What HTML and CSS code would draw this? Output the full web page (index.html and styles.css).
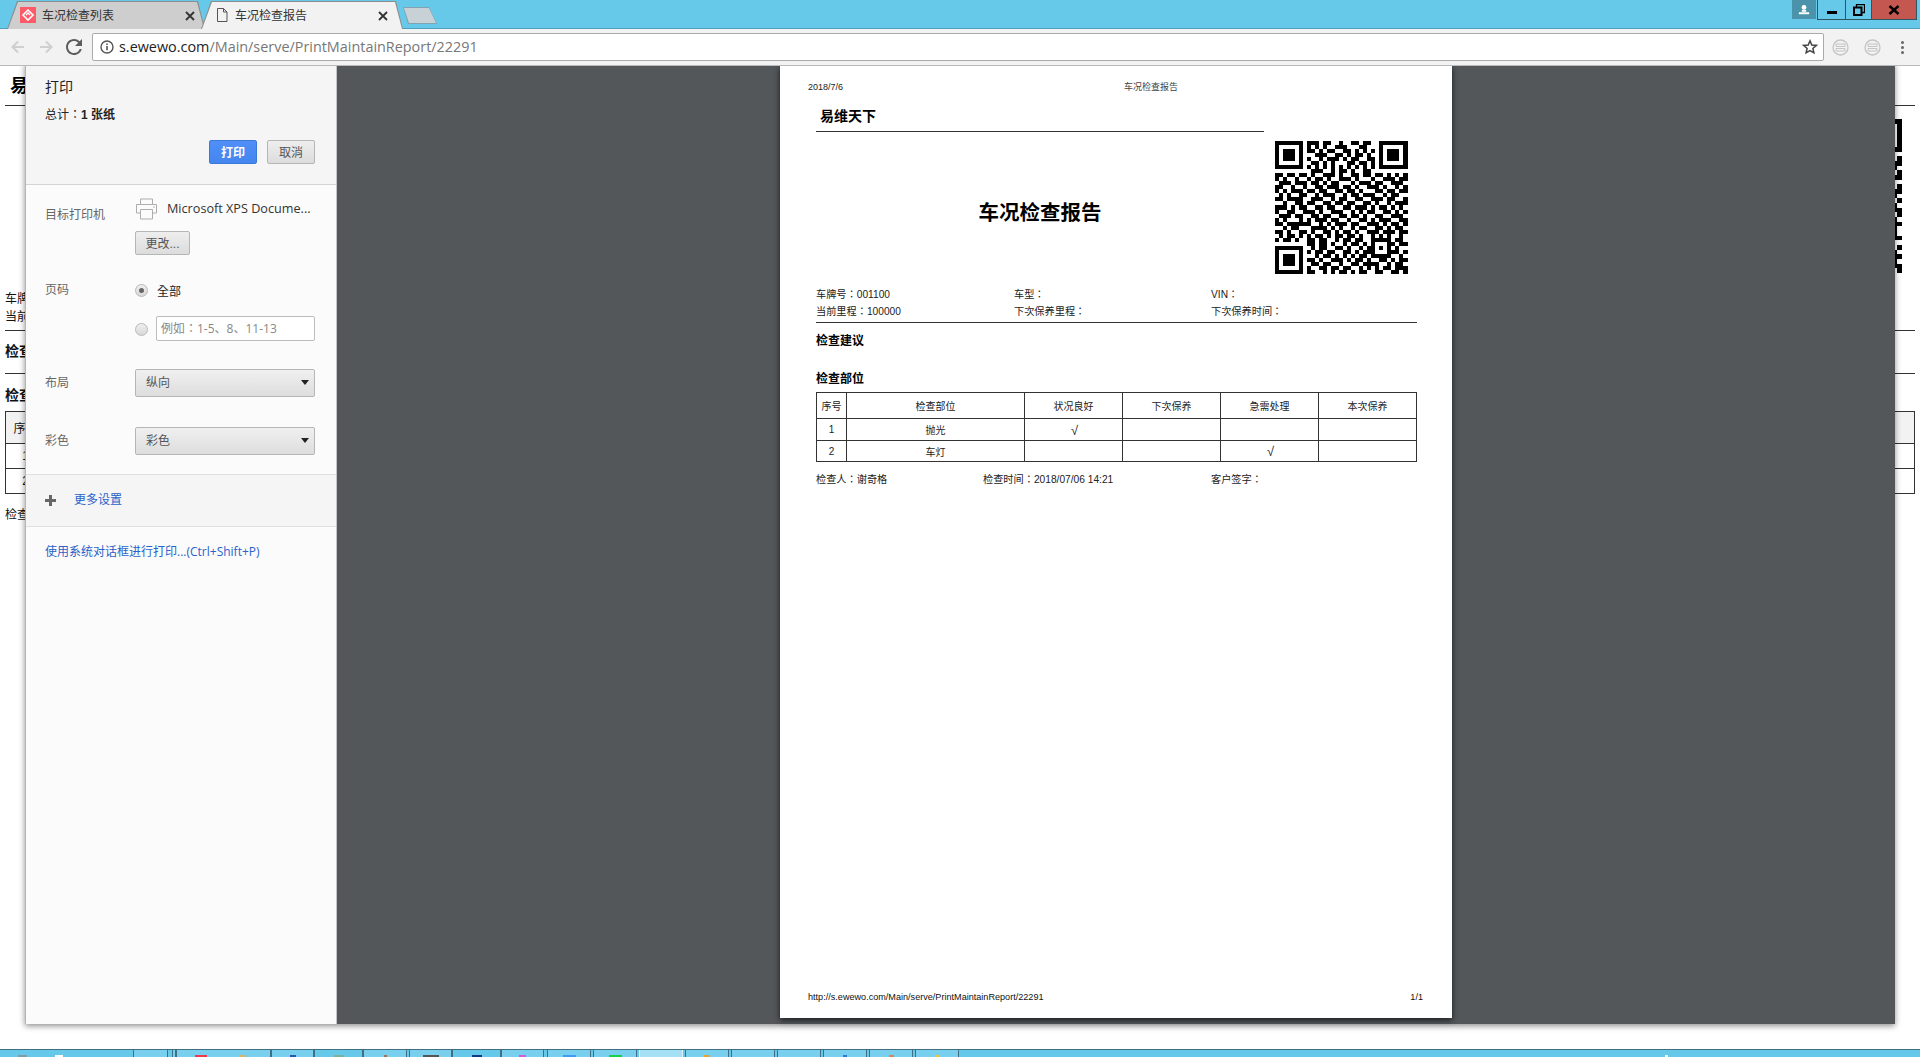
FILE: index.html
```html
<!DOCTYPE html>
<html lang="zh-Hant">
  <head>
    <meta charset="UTF-8" />
    <title>车况检查报告</title>
    <link rel="stylesheet" href="styles.css">
  </head>
  <body>
    <svg class="defs" width="0" height="0">
      <symbol id="qr" viewBox="0 0 33 33"><path id="qrPath" shape-rendering="crispEdges" fill="#000" /></symbol>
    </svg>

    <header class="tabstrip">
      <div class="tab tab-off">
        <svg class="tab-icon" width="16" height="16" viewBox="0 0 16 16"><rect width="16" height="16" fill="#ff5a68" /><path d="M8 3l5 5-5 5-5-5z" fill="none" stroke="#fff" stroke-width="1.6" /><path d="M6 8l2-2 2 2" fill="none" stroke="#fff" stroke-width="1.3" /></svg>
        <span class="tab-title">车况检查列表</span>
        <svg class="tab-close" width="10" height="10" viewBox="0 0 10 10"><path d="M1 1l8 8M9 1l-8 8" stroke="#333" stroke-width="1.8" /></svg>
      </div>
      <div class="tab tab-on">
        <svg class="tab-icon" width="16" height="16" viewBox="0 0 16 16"><path d="M3.5 1.5h6l3.500 3.500v9.500h-9.500z M9.500 1.500v3.500h3.500" fill="none" stroke="#555" stroke-width="1" /></svg>
        <span class="tab-title">车况检查报告</span>
        <svg class="tab-close" width="10" height="10" viewBox="0 0 10 10"><path d="M1 1l8 8M9 1l-8 8" stroke="#333" stroke-width="1.8" /></svg>
      </div>
      <div class="tab-new"></div>
      <div class="win-controls">
        <div class="win-user"><svg width="12" height="12" viewBox="0 0 14 14"><circle cx="7" cy="4" r="2.800" fill="#fff" /><path d="M4.500 7h5v2h-5zM1 9.500h12v2.500h-12z" fill="#fff" /></svg></div>
        <div class="win-btn win-min"><svg width="12" height="12" viewBox="0 0 12 12"><rect x="1" y="7" width="10" height="3" fill="#000" /></svg></div>
        <div class="win-btn win-max"><svg width="12" height="12" viewBox="0 0 12 12"><path d="M3.500 3V.500h8v8H9" fill="none" stroke="#000" stroke-width="1.300" /><rect x="1" y="3.500" width="7.500" height="7.500" fill="none" stroke="#000" stroke-width="2" /></svg></div>
        <div class="win-btn win-close"><svg width="12" height="12" viewBox="0 0 12 12"><path d="M1.500 2l9 8M10.500 2l-9 8" stroke="#000" stroke-width="2.400" /></svg></div>
      </div>
    </header>

    <nav class="toolbar">
      <div class="nav-btn"><svg width="16" height="16" viewBox="0 0 16 16"><path d="M14 8H2.500M8 2.500L2.500 8 8 13.500" fill="none" stroke="#cfcfcf" stroke-width="2" /></svg></div>
      <div class="nav-btn"><svg width="16" height="16" viewBox="0 0 16 16"><path d="M2 8h11.500M8 2.500L13.500 8 8 13.500" fill="none" stroke="#cfcfcf" stroke-width="2" /></svg></div>
      <div class="nav-btn"><svg width="18" height="18" viewBox="3 3 18 18"><path fill="#5c5c5c" d="M17.650 6.350A7.958 7.958 0 0 0 12 4c-4.420 0-7.990 3.580-7.990 8s3.570 8 7.990 8c3.730 0 6.840-2.550 7.730-6h-2.080A5.990 5.990 0 0 1 12 18c-3.310 0-6-2.690-6-6s2.690-6 6-6c1.660 0 3.140.690 4.220 1.780L13 11h7V4l-2.350 2.350z" /></svg></div>
      <div class="omnibox">
        <svg class="omni-info" width="14" height="14" viewBox="0 0 14 14"><circle cx="7" cy="7" r="6" fill="none" stroke="#555" stroke-width="1.400" /><path d="M6.200 6h1.600v4.300H6.200zM6.200 3.500h1.600v1.500H6.200z" fill="#555" /></svg>
        <span class="url"><span class="url-host">s.ewewo.com</span>/Main/serve/PrintMaintainReport/22291</span>
        <svg class="omni-star" width="16" height="16" viewBox="0 0 16 16"><path d="M8 1.800l1.800 4.200 4.500.4-3.400 3 1 4.400L8 11.500l-3.900 2.300 1-4.400-3.400-3 4.500-.4z" fill="none" stroke="#444" stroke-width="1.500" /></svg>
      </div>
      <div class="ext-btn"><svg width="17" height="17" viewBox="0 0 17 17"><circle cx="8.500" cy="8.500" r="7.500" fill="#f2f2f2" stroke="#c4c4c4" stroke-width="1.300" /><path d="M4 5h9v2.500H4zM4 9.500h9V12H4z" fill="none" stroke="#c4c4c4" /></svg></div>
      <div class="ext-btn"><svg width="17" height="17" viewBox="0 0 17 17"><circle cx="8.500" cy="8.500" r="7.500" fill="#f2f2f2" stroke="#c4c4c4" stroke-width="1.300" /><path d="M4 5h9v2.500H4zM4 9.500h9V12H4z" fill="none" stroke="#c4c4c4" /></svg></div>
      <div class="menu-btn"><i></i><i></i><i></i></div>
    </nav>

    <main class="page">
      <div class="bg-page">
        <h1 class="bg-brand">易维天下</h1>
        <div class="bg-top">
          <svg class="bg-qr"><use href="#qr" /></svg>
        </div>
        <p class="bg-line">车牌号：001100</p>
        <p class="bg-line bg-line-last">当前里程：100000</p>
        <h2 class="bg-h2">检查建议</h2>
        <h2 class="bg-h2 bg-h2-second">检查部位</h2>
        <table class="bg-table">
          <tr><th class="bg-no">序号</th><th>检查部位</th><th>状况良好</th><th>下次保养</th><th>急需处理</th><th>本次保养</th></tr>
          <tr><td>1</td><td>抛光</td><td>√</td><td></td><td></td><td></td></tr>
          <tr><td>2</td><td>车灯</td><td></td><td></td><td>√</td><td></td></tr>
        </table>
        <p class="bg-sign">检查人：谢奇格</p>
      </div>

      <div class="print-overlay">
        <aside class="print-side">
          <section class="side-head">
            <div class="side-title">打印</div>
            <div class="side-total">总计：<b>1 张纸</b></div>
            <div class="side-actions">
              <button class="btn btn-primary">打印</button>
              <button class="btn">取消</button>
            </div>
          </section>
          <section class="side-settings">
            <div class="setting setting-dest">
              <label>目标打印机</label>
              <div>
                <div class="dest-row">
                  <svg width="23" height="22" viewBox="0 0 23 22"><path d="M5.500 6V1h12v5M5.500 15H1.500V6.500h20V15h-4M5.500 11.500h12V21h-12z" fill="#fbfbfb" stroke="#adadad" /><circle cx="19" cy="9" r=".8" fill="#adadad" /></svg>
                  <span class="dest-name">Microsoft XPS Docume...</span>
                </div>
                <button class="btn btn-change">更改...</button>
              </div>
            </div>
            <div class="setting setting-pages">
              <label>页码</label>
              <div>
                <div class="radio-row"><span class="radio radio-on"></span><span class="radio-text">全部</span></div>
                <div class="radio-row radio-row-input"><span class="radio"></span><span class="page-input">例如：1-5<span lang="zh-Hans">、</span>8<span lang="zh-Hans">、</span>11-13</span></div>
              </div>
            </div>
            <div class="setting setting-select">
              <label>布局</label>
              <div class="select">纵向</div>
            </div>
            <div class="setting setting-select">
              <label>彩色</label>
              <div class="select">彩色</div>
            </div>
          </section>
          <section class="side-more">
            <svg width="11" height="11" viewBox="0 0 11 11"><path d="M4 0h3v4h4v3H7v4H4V7H0V4h4z" fill="#666" /></svg>
            <a class="side-link">更多设置</a>
          </section>
          <a class="side-link side-system">使用系统对话框进行打印...(Ctrl+Shift+P)</a>
        </aside>

        <div class="preview">
          <article class="paper">
            <div class="print-head"><span>2018/7/6</span><span class="print-head-title">车况检查报告</span></div>
            <div class="report">
              <div class="report-brand">易维天下</div>
              <div class="report-banner">
                <h1 class="report-title">车况检查报告</h1>
                <svg class="report-qr"><use href="#qr" /></svg>
              </div>
              <div class="info-grid">
                <span>车牌号：001100</span><span>车型：</span><span>VIN：</span>
                <span>当前里程：100000</span><span>下次保养里程：</span><span>下次保养时间：</span>
              </div>
              <h2 class="report-h2">检查建议</h2>
              <h2 class="report-h2 report-h2-parts">检查部位</h2>
              <table class="report-table">
                <tr class="row-head"><td class="col-no">序号</td><td class="col-part">检查部位</td><td class="col-s">状况良好</td><td class="col-s">下次保养</td><td class="col-s">急需处理</td><td>本次保养</td></tr>
                <tr class="row-a"><td>1</td><td>抛光</td><td class="check">√</td><td></td><td></td><td></td></tr>
                <tr class="row-b"><td>2</td><td>车灯</td><td></td><td></td><td class="check">√</td><td></td></tr>
              </table>
              <div class="sign-row">
                <span class="sign-a">检查人：谢奇格</span><span class="sign-b">检查时间：2018/07/06 14:21</span><span>客户签字：</span>
              </div>
            </div>
            <div class="print-foot"><span>http://s.ewewo.com/Main/serve/PrintMaintainReport/22291</span><span>1/1</span></div>
          </article>
        </div>
      </div>
    </main>

    <footer class="taskbar">
      <i class="tb-icon tb-lead-a"></i>
      <i class="tb-icon tb-lead-b"></i>
      <div class="tb-btn w35"></div>
      <div class="tb-btn w4"></div>
      <div class="tb-btn w95"><i class="tb-icon ic-red"></i><i class="tb-icon ic-tan"></i></div>
      <div class="tb-btn w43"><i class="tb-icon ic-blue"></i></div>
      <div class="tb-btn w49"><i class="tb-icon ic-sage"></i></div>
      <div class="tb-btn"><i class="tb-icon ic-brown"></i></div>
      <div class="tb-btn w43"><i class="tb-icon ic-grey"></i></div>
      <div class="tb-btn w49"><i class="tb-icon ic-navy"></i></div>
      <div class="tb-btn w43 gap3"><i class="tb-icon ic-pink"></i></div>
      <div class="tb-btn"><i class="tb-icon ic-sky"></i></div>
      <div class="tb-btn"><i class="tb-icon ic-green"></i></div>
      <div class="tb-btn tb-active"></div>
      <div class="tb-btn"><i class="tb-icon ic-orange"></i></div>
      <div class="tb-btn"></div>
      <div class="tb-btn"></div>
      <div class="tb-btn"><i class="tb-icon ic-blue2"></i></div>
      <div class="tb-btn"><i class="tb-icon ic-salmon"></i></div>
      <div class="tb-btn"><i class="tb-icon ic-yellow"></i></div>
      <i class="tb-tray"></i>
    </footer>

    <script src="qr.js"></script>
  </body>
</html>
```

FILE: styles.css
```css
* {
  box-sizing: border-box;
}
html,
body {
  margin: 0;
  height: 100%;
  overflow: hidden;
}
body {
  display: flex;
  flex-direction: column;
  height: 1057px;
  font-family: "Liberation Sans", "Noto Sans CJK TC", sans-serif;
  font-size: 12px;
  color: #111;
  background: #fff;
}
.defs {
  position: absolute;
}
h1,
h2,
p {
  margin: 0;
}

/* tabs */
.tabstrip {
  display: flex;
  flex: none;
  height: 29px;
  padding: 1px 0 0 7px;
  background: #66c9ea;
  border-bottom: 1px solid #4fa0bb;
}
.tab {
  position: relative;
  display: flex;
  align-items: center;
  width: 198px;
  height: 28px;
  background: #8d8d8d;
  clip-path: polygon(0 100%, 10px 0, calc(100% - 7px) 0, 100% 100%);
}
.tab::before {
  content: "";
  position: absolute;
  inset: 1px 1px 0;
  clip-path: polygon(0 100%, 10px 0, calc(100% - 7px) 0, 100% 100%);
}
.tab > * {
  position: relative;
}
.tab-off::before {
  background: #cecece;
}
.tab-on {
  width: 202px;
  margin-left: -4px;
}
.tab-on::before {
  background: #f2f2f2;
}
.tab-icon {
  margin-left: 13px;
}
.tab-title {
  margin: -2px 0 0 6px;
  width: 72px;
  color: #333;
  white-space: nowrap;
}
.tab-close {
  margin-left: 71px;
  margin-top: 1px;
}
.tab-on .tab-title {
  margin-left: 5px;
}
.tab-new {
  position: relative;
  width: 34px;
  height: 17px;
  margin: 6px 0 0 0;
  background: #7fa3b0;
  clip-path: polygon(0 0, 26px 0, 100% 100%, 5px 100%);
}
.tab-new::before {
  content: "";
  position: absolute;
  inset: 1px 1px 1px;
  background: #c8d2d6;
  clip-path: polygon(0 0, 25px 0, 100% 100%, 5px 100%);
}
.win-controls {
  display: flex;
  margin: -1px 3px 0 auto;
  height: 20px;
}
.win-user {
  display: flex;
  align-items: center;
  justify-content: center;
  width: 24px;
  height: 19px;
  margin-right: 1px;
  background: #4a93aa;
}
.win-btn {
  display: flex;
  align-items: center;
  justify-content: center;
  border: 1px solid #2f5563;
  border-top: none;
  border-left: none;
}
.win-min {
  width: 29px;
  border-left: 1px solid #2f5563;
}
.win-max {
  width: 26px;
}
.win-close {
  width: 45px;
  background: #c4574f;
}

/* toolbar */
.toolbar {
  display: flex;
  align-items: center;
  flex: none;
  height: 37px;
  padding: 0 4px;
  background: #f2f2f2;
  border-bottom: 1px solid #b9b9b9;
}
.nav-btn {
  display: flex;
  align-items: center;
  justify-content: center;
  width: 28px;
}
.omnibox {
  display: flex;
  align-items: center;
  flex: 1;
  height: 28px;
  margin-left: 4px;
  margin-top: -1px;
  padding: 0 5px 0 7px;
  background: #fff;
  border: 1px solid #aaa;
  border-radius: 2px;
}
.url {
  flex: 1;
  margin-left: 5px;
  font-family: "Open Sans", "Noto Sans", sans-serif;
  font-size: 14.400px;
  color: #777;
}
.url-host {
  color: #222;
}
.ext-btn {
  display: flex;
  justify-content: center;
  width: 32px;
}
.menu-btn {
  display: flex;
  flex-direction: column;
  align-items: center;
  gap: 2px;
  width: 28px;
}
.menu-btn i {
  width: 3px;
  height: 3px;
  background: #666;
  border-radius: 50%;
}

/* page behind the print dialog */
.page {
  position: relative;
  flex: 1;
  background: #fff;
  overflow: hidden;
}
.bg-page {
  padding: 0 5px;
}
.bg-brand {
  padding: 10px 0 9px 5px;
  font-size: 18px;
  line-height: 20px;
  font-weight: 600;
  color: #000;
  border-bottom: 1px solid #333;
}
.bg-top {
  display: flex;
  justify-content: flex-end;
  height: 184px;
  padding: 13px 13px 0 0;
}
.bg-qr {
  width: 154px;
  height: 154px;
}
.bg-line {
  height: 18px;
  line-height: 19px;
}
.bg-line-last {
  height: 23px;
  border-bottom: 1px solid #333;
}
.bg-h2 {
  height: 43px;
  padding-top: 11px;
  font-size: 14px;
  line-height: 18px;
  border-bottom: 1px solid #333;
}
.bg-h2-second {
  height: 37px;
  padding-top: 12px;
  border-bottom: none;
}
.bg-table {
  width: 100%;
  border-collapse: collapse;
  text-align: center;
}
.bg-table th,
.bg-table td {
  border: 1px solid #333;
  font-weight: normal;
  padding: 0;
  height: 25px;
}
.bg-table th {
  height: 32px;
  background: #f2f2f2;
}
.bg-no {
  width: 40px;
}
.bg-sign {
  margin-top: 12px;
  line-height: 18px;
}

/* print preview */
.print-overlay {
  position: absolute;
  top: -3px;
  left: 25px;
  display: flex;
  width: 1870px;
  height: 961px;
  box-shadow: 0 2px 6px rgba(0, 0, 0, 0.45);
}
.print-side {
  flex: none;
  width: 312px;
  background: #fbfbfb;
  border-left: 1px solid #b5b5b5;
  border-right: 1px solid #c4c4c4;
  border-top: 1px solid #c4c4c4;
}
.side-head {
  height: 121px;
  padding: 13px 21px 0 19px;
  background: #f5f5f5;
  border-bottom: 1px solid #d4d4d4;
}
.side-title {
  font-size: 14px;
  line-height: 20px;
  color: #222;
}
.side-total {
  margin-top: 9px;
  line-height: 18px;
  color: #222;
}
.side-actions {
  display: flex;
  justify-content: flex-end;
  gap: 10px;
  margin-top: 16px;
}
.btn {
  width: 48px;
  height: 24px;
  padding: 0 0 1px;
  font: 12px "Liberation Sans", "Noto Sans CJK TC", sans-serif;
  color: #555;
  background: linear-gradient(#eeeeee, #dcdcdc);
  border: 1px solid #b6b6b6;
  border-radius: 2px;
}
.btn-primary {
  font-weight: bold;
  color: #fff;
  background: linear-gradient(#4f8ff7, #4485ef);
  border-color: #3c78d8;
}
.btn-change {
  display: block;
  width: 55px;
  margin-top: 11px;
  padding-bottom: 2px;
}
.side-settings {
  height: 290px;
  padding: 12px 20px 0 19px;
  border-bottom: 1px solid #e0e0e0;
}
.setting {
  display: grid;
  grid-template-columns: 90px 180px;
}
.setting label {
  color: #666;
  line-height: 18px;
}
.setting-dest label {
  margin-top: 9px;
}
.dest-row {
  display: flex;
  align-items: center;
  height: 23px;
}
.dest-name {
  margin-left: 9px;
  margin-top: -1px;
  font-family: "Open Sans", "Noto Sans", sans-serif;
  font-size: 12.650px;
  color: #333;
  white-space: nowrap;
}
.setting-pages {
  margin-top: 26px;
}
.radio-row {
  display: flex;
  align-items: center;
  height: 18px;
}
.radio-row-input {
  height: 25px;
  margin-top: 17px;
}
.radio-row-input .radio {
  margin-top: 2px;
}
.radio {
  flex: none;
  display: flex;
  align-items: center;
  justify-content: center;
  width: 13px;
  height: 13px;
  background: linear-gradient(#efefef, #d8d8d8);
  border: 1px solid #b8b8b8;
  border-radius: 50%;
}
.radio-on::after {
  content: "";
  width: 5px;
  height: 5px;
  background: #666;
  border-radius: 50%;
}
.radio-text {
  margin-left: 9px;
  color: #222;
}
.page-input {
  flex: 1;
  height: 25px;
  margin-left: 8px;
  padding-left: 4px;
  font-family: "Open Sans", "Noto Sans CJK TC", sans-serif;
  line-height: 23px;
  color: #888;
  background: #fff;
  border: 1px solid #bcbcbc;
  border-radius: 2px;
}
.setting-select {
  margin-top: 28px;
}
.setting-select label {
  margin-top: 5px;
}
.setting-select + .setting-select {
  margin-top: 30px;
}
.select {
  position: relative;
  height: 28px;
  padding-left: 10px;
  line-height: 27px;
  color: #555;
  background: linear-gradient(#f0f0f0, #dddddd);
  border: 1px solid #b6b6b6;
  border-radius: 2px;
}
.select::after {
  content: "";
  position: absolute;
  right: 5px;
  top: 10px;
  border: 4.500px solid transparent;
  border-top: 5px solid #222;
  border-bottom: none;
}
.side-more {
  display: flex;
  align-items: center;
  gap: 18px;
  height: 52px;
  padding: 0 0 4px 19px;
  background: #f5f5f5;
  border-bottom: 1px solid #e0e0e0;
}
.side-link {
  color: #2a62c9;
}
.side-more svg {
  margin-top: 3px;
}
.side-system {
  display: block;
  margin: 16px 0 0 19px;
  font-family: "Open Sans", "Noto Sans CJK TC", sans-serif;
  line-height: 18px;
}
.preview {
  flex: 1;
  padding-top: 3px;
  background: #53575a;
}
.paper {
  position: relative;
  width: 672px;
  height: 952px;
  margin: 0 auto;
  background: #fff;
  box-shadow: 0 2px 6px rgba(0, 0, 0, 0.7);
}
.print-head {
  display: flex;
  padding: 15px 0 0 28px;
  font-size: 9px;
  line-height: 12px;
  color: #222;
}
.print-head span:first-child {
  width: 316px;
}
.print-head-title {
  font-family: "Liberation Serif", "Noto Sans CJK SC", serif;
  color: #444;
}
.report {
  padding: 12px 35px 0 36px;
}
.report-brand {
  width: 448px;
  height: 27px;
  padding: 3px 0 0 4px;
  font-size: 14px;
  font-weight: bold;
  line-height: 16px;
  color: #000;
  border-bottom: 1px solid #333;
}
.report-banner {
  display: flex;
  align-items: center;
  margin-top: 9px;
}
.report-title {
  width: 448px;
  margin-top: 6px;
  font-size: 20.500px;
  text-align: center;
  color: #000;
}
.report-qr {
  width: 134px;
  height: 133px;
  margin-left: 10px;
}
.info-grid {
  display: grid;
  grid-template-columns: 198px 197px 1fr;
  grid-auto-rows: 17px;
  margin-top: 12px;
  padding-bottom: 2px;
  font-size: 10.200px;
  line-height: 17px;
  color: #222;
  border-bottom: 1px solid #333;
}
.report-h2 {
  height: 38px;
  padding-top: 10px;
  font-size: 12px;
  line-height: 16px;
  color: #000;
}
.report-h2-parts {
  height: 31px;
  padding-top: 10px;
}
.report-table {
  width: 100%;
  border-collapse: collapse;
  table-layout: fixed;
  font-size: 10px;
  text-align: center;
  color: #222;
}
.report-table td {
  padding: 0;
  border: 1px solid #333;
}
.report-table .check {
  padding: 2px 0 0 2px;
  font-size: 13px;
  line-height: 14px;
}
.col-no {
  width: 30px;
}
.col-part {
  width: 178px;
}
.col-s {
  width: 98px;
}
.row-head {
  height: 26px;
}
.row-a {
  height: 22px;
}
.row-b {
  height: 21px;
}
.sign-row {
  display: flex;
  margin-top: 11px;
  font-size: 10.200px;
  line-height: 14px;
  color: #222;
}
.sign-a {
  width: 167px;
}
.sign-b {
  width: 228px;
}
.print-foot {
  position: absolute;
  left: 28px;
  right: 29px;
  bottom: 15px;
  display: flex;
  justify-content: space-between;
  font-size: 9.100px;
  line-height: 12px;
  color: #111;
}

/* taskbar */
.taskbar {
  display: flex;
  flex: none;
  height: 8px;
  padding-left: 18px;
  background: #66c9ea;
  border-top: 1px solid #3f6f80;
}
.tb-btn {
  display: flex;
  flex: none;
  align-items: flex-end;
  justify-content: center;
  gap: 33px;
  width: 44px;
  margin-right: 2px;
  background: #78d0ee;
  border-left: 1px solid #3f6f80;
  border-right: 1px solid #3f6f80;
}
.w35 {
  width: 35px;
  margin-right: 4px;
}
.w4 {
  width: 4px;
  margin-right: 0;
}
.w95 {
  justify-content: flex-start;
  width: 95px;
  margin-right: 0;
  padding-left: 18px;
}
.w43 {
  width: 43px;
  margin-right: 0;
}
.w49 {
  width: 49px;
  margin-right: 0;
  background: #66c9ea;
}
.gap3 {
  margin-right: 3px;
}
.tb-active {
  background: #a6e0f4;
  border-color: #dfeff5;
}
.tb-icon {
  flex: none;
  align-self: flex-end;
  width: 10px;
  height: 2px;
}
.tb-lead-a { background: #7f9ca8; width: 9px; }
.tb-lead-b { background: #fff; width: 8px; margin: 0 70px 0 28px; }
.ic-red { background: #f2384f; width: 12px; }
.ic-tan { background: #d8b36a; width: 6px; }
.ic-blue { background: #2a55b0; width: 6px; }
.ic-sage { background: #7fb09a; }
.ic-brown { background: #a0725a; width: 3px; }
.ic-grey { background: #555; width: 16px; }
.ic-navy { background: #123a80; }
.ic-pink { background: #d65bd8; width: 7px; }
.ic-sky { background: #3f9cf5; width: 13px; }
.ic-green { background: #14d34a; width: 13px; }
.ic-orange { background: #e8a23a; width: 6px; }
.ic-blue2 { background: #2b7ad8; width: 4px; }
.ic-salmon { background: #d8855f; width: 5px; }
.ic-yellow { background: #e8c84a; width: 4px; }
.tb-tray {
  align-self: flex-end;
  width: 3px;
  height: 2px;
  margin-left: 704px;
  background: #fff;
}
```

FILE: qr.js
```js
// module rows of the report's QR code, drawn into the shared <symbol>
var rows = [
  "1111111"+"0"+"11101100100110110"+"0"+"1111111",
  "1000001"+"0"+"10101001110001100"+"0"+"1000001",
  "1011101"+"0"+"11010110011010101"+"0"+"1011101",
  "1011101"+"0"+"00111001101011010"+"0"+"1011101",
  "1011101"+"0"+"10010111010110011"+"0"+"1011101",
  "1000001"+"0"+"01101010001101101"+"0"+"1000001",
  "1111111"+"0"+"10101010101010101"+"0"+"1111111",
  "00000000"+"01110010110100110"+"00000000",
  "110110110100111010011011011010101",
  "101001001011010011101000100111011",
  "011101110110101100010111011001110",
  "110010010011011101101001110100101",
  "101011101101100110110100011011011",
  "010100110010111001011011100101100",
  "110111100111001011001100111011001",
  "001001101100110110110011010010111",
  "111010110011011001101110101101010",
  "100110011101001110010101100110101",
  "011101100110110011011010011001110",
  "101000101011101100100110101110011",
  "110111111001010111011001110101101",
  "001011000111101010010110011010110",
  "110100110100110101101001110111011",
  "010110101011010110110100101010010",
  "101101001101100101101100"+"11111"+"0110",
  "00000000"+"1101101001011010"+"10001"+"1011",
  "1111111"+"0"+"0101100110100101"+"10101"+"0100",
  "1000001"+"0"+"1011011001101011"+"10001"+"1101",
  "1011101"+"0"+"0010110101010110"+"11111"+"0010",
  "1011101"+"0"+"1101001110101101"+"00110"+"1011",
  "1011101"+"0"+"0110110010011011"+"11001"+"0110",
  "1000001"+"0"+"1001101101100101"+"01011"+"0111",
  "1111111"+"0"+"1100101011010110"+"01100"+"1101"
];

var d = "";
rows.forEach(function (row, y) {
  row.split("").forEach(function (cell, x) {
    if (cell === "1") d += "M" + x + " " + y + "h1v1h-1z";
  });
});
document.getElementById("qrPath").setAttribute("d", d);
```
